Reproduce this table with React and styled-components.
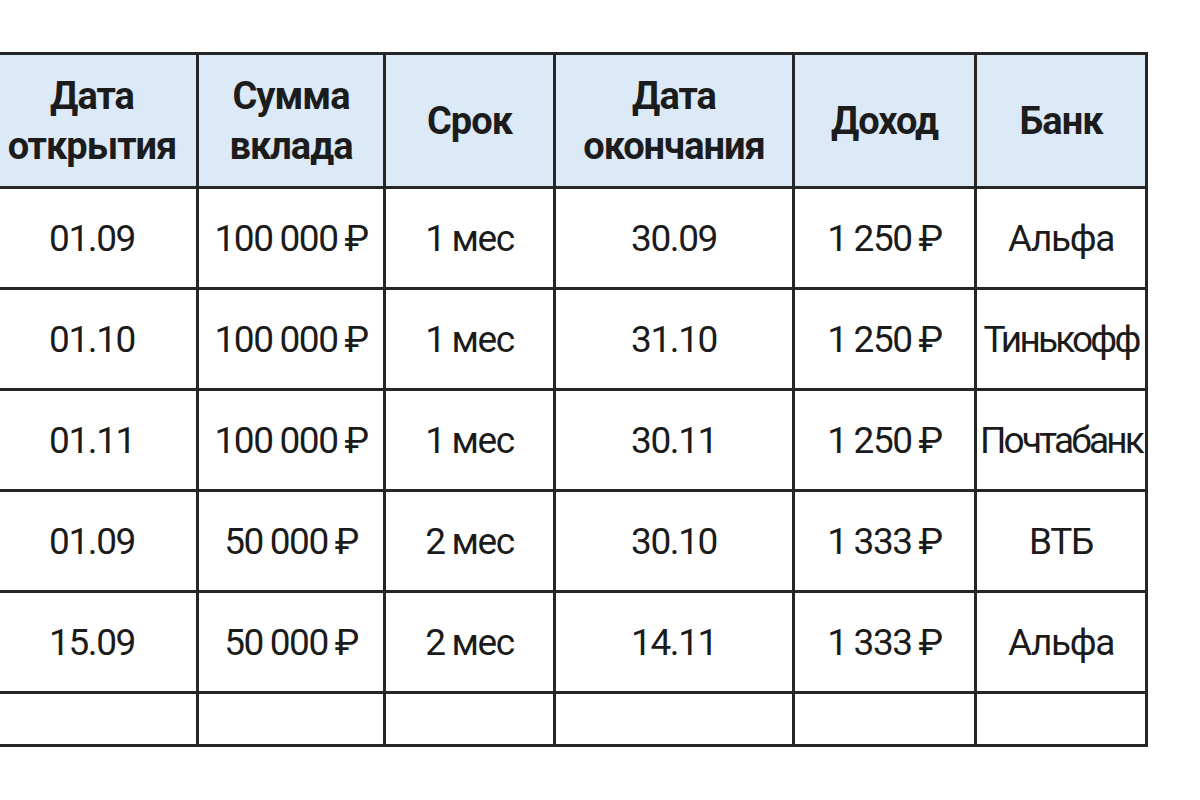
import styled, { createGlobalStyle } from 'styled-components'

const GlobalStyle = createGlobalStyle`
   html, body {
      margin: 0;
      padding: 0;
      background: #ffffff;
   }
   body {
      font-family: Roboto, "Liberation Sans", sans-serif;
      color: #1b1b1b;
      overflow: hidden;
   }
`

// страница с таблицей вкладов (левый край таблицы уходит за экран)
const Page = styled.div`
   width: 1200px;
   height: 800px;
   padding-top: 52px;
   box-sizing: border-box;
   overflow: hidden;
`

const Table = styled.table`
   margin-left: -15px;
   border-collapse: collapse;
   table-layout: fixed;
   width: 1160px;
`

const HeadRow = styled.tr`
   height: 134px;
   background: #dceaf8;
`

const Row = styled.tr`
   height: ${(props) => (props.empty ? '53px' : '101px')};
`

const Th = styled.th`
   border: 3px solid #262626;
   padding: 0;
   font-size: 38px;
   font-weight: 700;
   line-height: 50px;
   letter-spacing: -1px;
   text-align: center;
   vertical-align: middle;
   color: #1c1c1c;
`

// длинные названия банков в оригинале заметно уже
const Td = styled.td`
   border: 3px solid #262626;
   padding: 0;
   font-size: 37px;
   font-weight: 400;
   letter-spacing: ${(props) => (props.narrow ? '-2.8px' : '-1.4px')};
   word-spacing: -1px;
   text-align: center;
   vertical-align: middle;
   white-space: nowrap;
   color: #1b1b1b;
`

const widths = [211, 187, 170, 239, 182, 171]

const headers = [
   ['Дата', 'открытия'],
   ['Сумма', 'вклада'],
   ['Срок'],
   ['Дата', 'окончания'],
   ['Доход'],
   ['Банк'],
]

const rows = [
   ['01.09', '100 000 ₽', '1 мес', '30.09', '1 250 ₽', 'Альфа'],
   ['01.10', '100 000 ₽', '1 мес', '31.10', '1 250 ₽', 'Тинькофф'],
   ['01.11', '100 000 ₽', '1 мес', '30.11', '1 250 ₽', 'Почтабанк'],
   ['01.09', '50 000 ₽', '2 мес', '30.10', '1 333 ₽', 'ВТБ'],
   ['15.09', '50 000 ₽', '2 мес', '14.11', '1 333 ₽', 'Альфа'],
]

function App() {
   return (
      <Page>
         <GlobalStyle />
         <Table>
            <colgroup>
               {widths.map((w, i) => (
                  <col key={i} style={{ width: w }} />
               ))}
            </colgroup>
            <thead>
               <HeadRow>
                  {headers.map((lines, i) => (
                     <Th key={i}>
                        {lines.map((l, j) => (
                           <div key={j}>{l}</div>
                        ))}
                     </Th>
                  ))}
               </HeadRow>
            </thead>
            <tbody>
               {rows.map((r, i) => (
                  <Row key={i}>
                     {r.map((c, j) => (
                        <Td key={j} narrow={c.length > 6 && !/\d/.test(c)}>
                           {c}
                        </Td>
                     ))}
                  </Row>
               ))}
               <Row empty>
                  {widths.map((w, j) => (
                     <Td key={j} />
                  ))}
               </Row>
            </tbody>
         </Table>
      </Page>
   )
}

export default App
